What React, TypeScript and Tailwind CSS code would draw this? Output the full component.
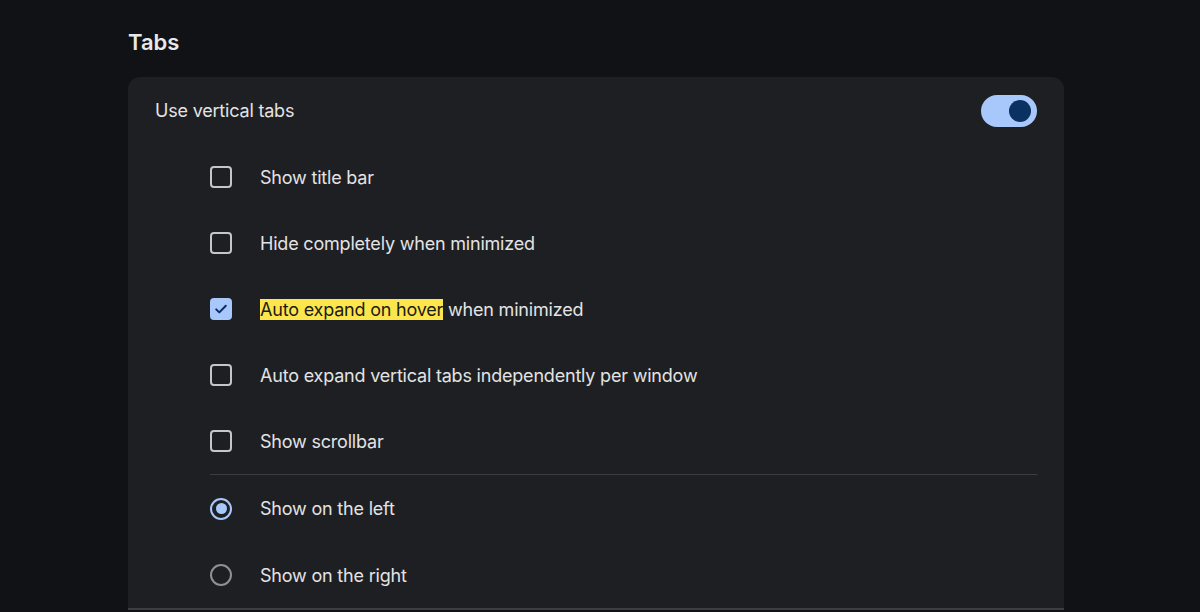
import { useState } from 'react';

type CheckItem = { label: React.ReactNode; checked: boolean };

const checks: CheckItem[] = [
  { label: 'Show title bar', checked: false },
  { label: 'Hide completely when minimized', checked: false },
  {
    label: (
      <>
        <mark className="bg-[#fde64b] text-[#1b1b1b]">Auto expand on hover</mark> when minimized
      </>
    ),
    checked: true,
  },
  { label: 'Auto expand vertical tabs independently per window', checked: false },
  { label: 'Show scrollbar', checked: false },
];

function Checkbox({ checked }: { checked: boolean }) {
  if (checked) {
    return (
      <span className="flex h-[22px] w-[22px] items-center justify-center rounded-[4px] bg-[#a8c7fa]">
        <svg width="16" height="16" viewBox="0 0 16 16" fill="none">
          <path d="M3.2 8.4l3.1 3 6.5-6.6" stroke="#0a2c63" strokeWidth="2" strokeLinecap="round" strokeLinejoin="round" />
        </svg>
      </span>
    );
  }
  return <span className="h-[22px] w-[22px] rounded-[4px] border-2 border-[#c4c7c5]" />;
}

function Radio({ checked }: { checked: boolean }) {
  return checked ? (
    <span className="flex h-[22px] w-[22px] items-center justify-center rounded-full border-2 border-[#a8c7fa]">
      <span className="h-[11px] w-[11px] rounded-full bg-[#a8c7fa]" />
    </span>
  ) : (
    <span className="h-[22px] w-[22px] rounded-full border-2 border-[#8e918f]" />
  );
}

export default function App() {
  const [side] = useState<'left' | 'right'>('left');

  return (
    <div
      className="h-[612px] w-full overflow-hidden bg-[#111215] text-[#e3e3e3]"
      style={{ fontFamily: 'Inter, "Noto Sans", sans-serif' }}
    >
      <div className="ml-[128px] w-[936px] pt-[28px]">
        <h2 className="text-[22px] font-semibold leading-[28px] text-[#e8e8e8]">Tabs</h2>
        <div className="mt-[21px] rounded-t-[12px] bg-[#1e1f23] tracking-[-0.2px]">
          <div className="flex h-[67px] items-center justify-between pl-[27px] pr-[27px]">
            <span className="text-[18px]">Use vertical tabs</span>
            <span className="flex h-[32px] w-[56px] items-center justify-end rounded-full bg-[#a8c7fa] pr-[6px]">
              <span className="h-[22px] w-[22px] rounded-full bg-[#0b3161]" />
            </span>
          </div>
          <div className="pl-[82px] pr-[27px]">
            {checks.map((c, i) => (
              <div key={i} className="flex h-[66px] items-center gap-[28px]">
                <Checkbox checked={c.checked} />
                <span className="text-[18px]">{c.label}</span>
              </div>
            ))}
            <div className="h-px bg-[#3c3d41]" />
            <div className="flex h-[67px] items-center gap-[28px]">
              <Radio checked={side === 'left'} />
              <span className="text-[18px]">Show on the left</span>
            </div>
            <div className="flex h-[66px] items-center gap-[28px]">
              <Radio checked={side === 'right'} />
              <span className="text-[18px]">Show on the right</span>
            </div>
          </div>
          <div className="h-[2px] bg-[#3c3d41]" />
        </div>
      </div>
    </div>
  );
}
